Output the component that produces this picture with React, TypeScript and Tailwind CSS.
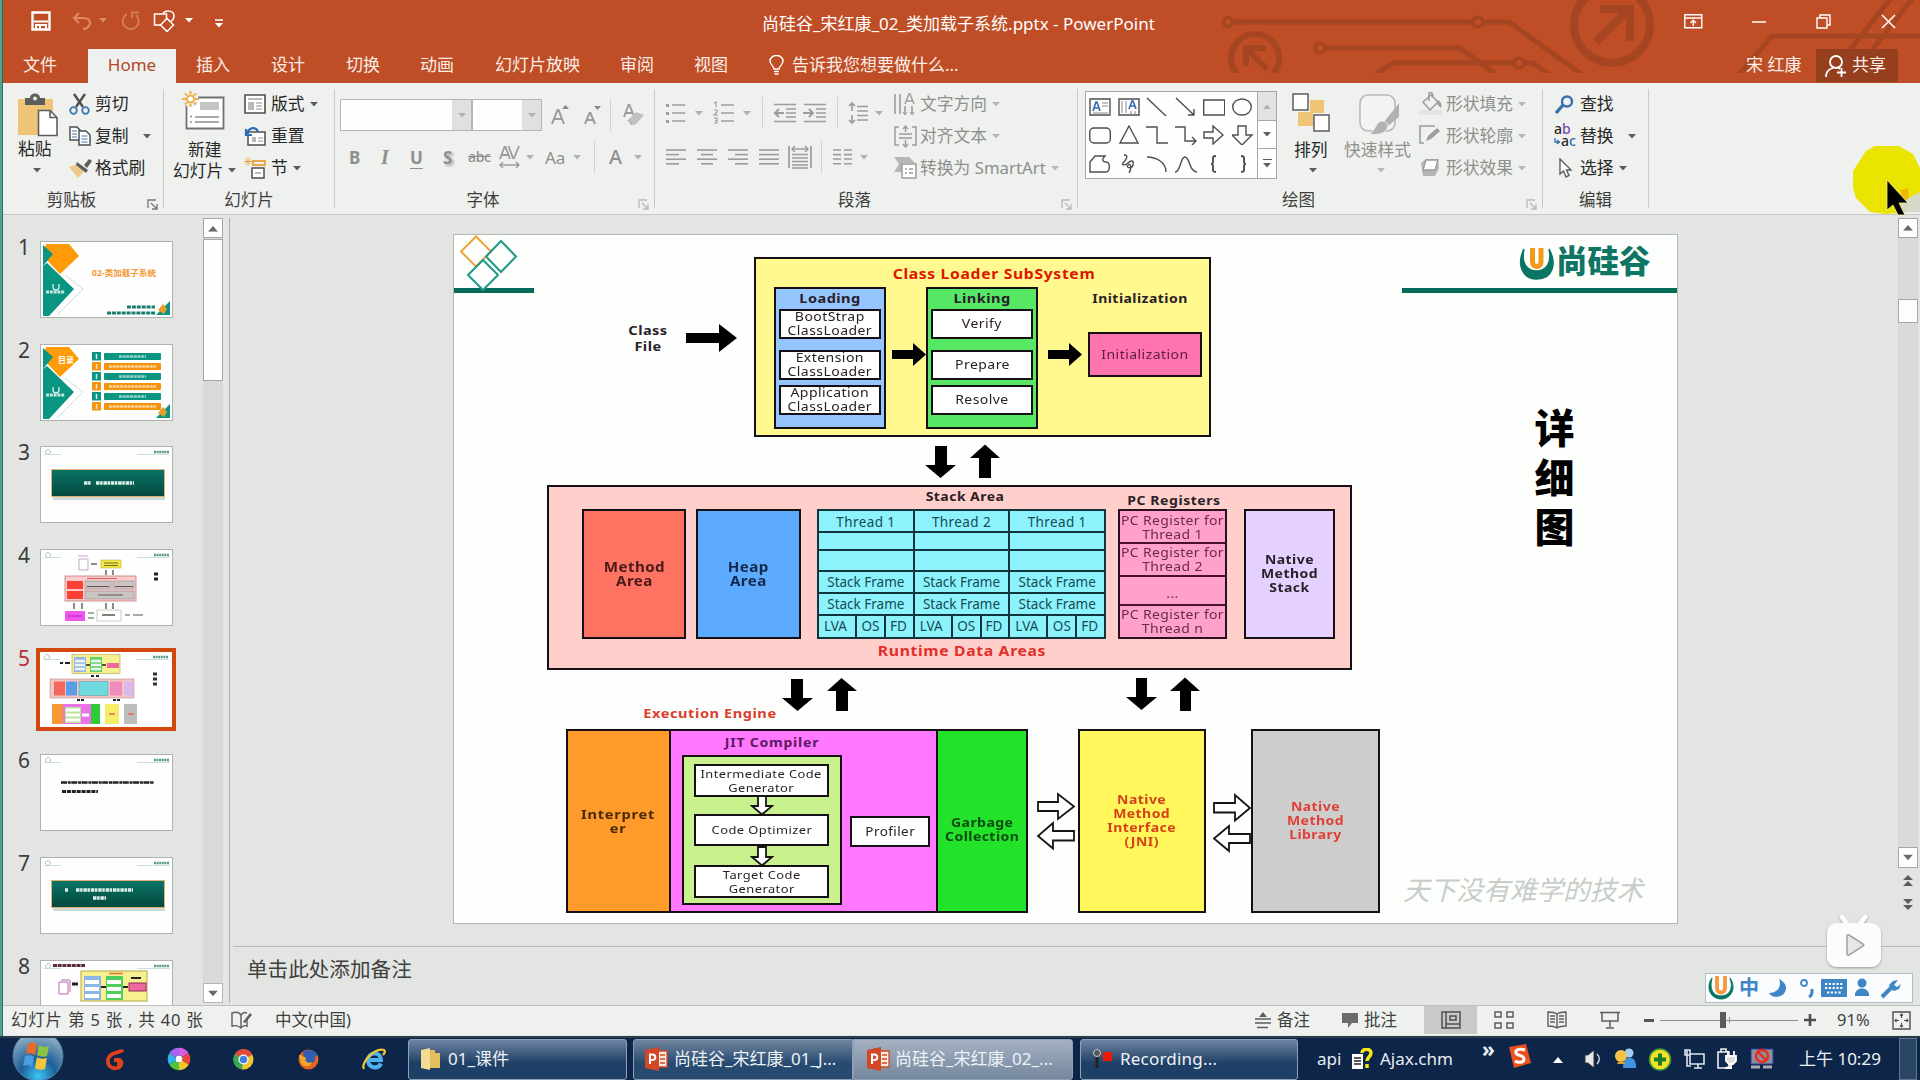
import React from "react";
import type { ReactNode } from "react";

const G = "#9b9d9b";
const D = "#4d4f4d";

function Svg({ w, h, className = "", children }: { w: number; h: number; className?: string; children: ReactNode }) {
  return (
    <svg width={w} height={h} viewBox={`0 0 ${w} ${h}`} className={`shrink-0 ${className}`} fill="none">
      {children}
    </svg>
  );
}

function Chev({ c = "#5c5e5c", className = "" }: { c?: string; className?: string }) {
  return (
    <Svg w={8} h={5} className={className}>
      <path d="M0 0h8L4 4.6z" fill={c} />
    </Svg>
  );
}

function Sep({ className = "" }: { className?: string }) {
  return <div className={`h-8 w-px shrink-0 bg-[#cfd1cf] ${className}`} />;
}

function Launcher({ c = "#777977", className = "" }: { c?: string; className?: string }) {
  return (
    <Svg w={11} h={11} className={className}>
      <path d="M1 9V1h8M4 4l5.5 5.5M10 5v5H5" stroke={c} strokeWidth="1.3" />
    </Svg>
  );
}

/* ------------------------------------------------------------------ title */

function Circuit() {
  return (
    <Svg w={700} h={73}>
      <g stroke="#a54521" strokeWidth="5">
        <circle cx="8" cy="22" r="4.5" strokeWidth="3.5" />
        <path d="M13 22H253M263 22h26l75 54" />
        <circle cx="258" cy="22" r="5" strokeWidth="3.5" />
        <circle cx="35" cy="58" r="24" strokeWidth="6" />
        <path d="M47 69L29 51M26 66V48h20" strokeWidth="6" />
        <circle cx="100" cy="48" r="5" strokeWidth="3.5" />
        <path d="M106 48H240l38 28M153 76l20-13h120M305 63h8l18 13" />
        <circle cx="299" cy="63" r="5" strokeWidth="3.5" />
        <circle cx="392" cy="25" r="38" strokeWidth="8" />
        <path d="M376 42l31-31M380 9h30v32" strokeWidth="8" />
        <path d="M518 76l34-40h148M630 50l41-52M652 50l41-52" />
      </g>
    </Svg>
  );
}

function TitleBar() {
  return (
    <div className="flex h-[49px] items-start text-white">
      <Svg w={20} h={20} className="mt-[11px] ml-[28px]">
        <path d="M1.5 1.5h17v17h-17z" stroke="#fff" strokeWidth="2.4" />
        <path d="M3 10.500h14M5 19v-5h10v5M9 14.500v4" stroke="#fff" strokeWidth="2" />
      </Svg>
      <Svg w={20} h={18} className="mt-[12px] ml-[21px]">
        <path d="M7 1L2 6l5 5M2 6h9c5 0 7 2 7 5s-3 6-7 6" stroke="#dd8869" strokeWidth="2.2" />
      </Svg>
      <Chev c="#dd8869" className="mt-[18px] ml-[7px]" />
      <Svg w={20} h={20} className="mt-[10px] ml-[14px]">
        <path d="M6 4A8 8 0 1 0 15 5M11 2v6M10.500 2.500H18" stroke="#d27a59" strokeWidth="2" />
      </Svg>
      <Svg w={26} h={22} className="mt-[10px] ml-[12px]">
        <path d="M1.500 4h12v11h-12zM10 3c3-3 11-3 11 3 0 2-1 4-3 5" stroke="#fff" strokeWidth="1.500" />
        <path d="M14 8.500l6.500 6.500-6.500 6.500L7.500 15z" stroke="#fff" fill="#bf4e26" strokeWidth="1.500" />
      </Svg>
      <Chev c="#fff" className="mt-[18px] ml-[6px]" />
      <Svg w={8} h={9} className="mt-[19px] ml-[22px]">
        <path d="M0 1h8" stroke="#fff" strokeWidth="1.500" />
        <path d="M0 4h8L4 8.500z" fill="#fff" />
      </Svg>
      <div className="mt-[12px] ml-[539px] w-[400px] text-[17px] leading-6 whitespace-nowrap">
        尚硅谷_宋红康_02_类加载子系统.pptx - PowerPoint
      </div>
      <Svg w={19} h={15} className="mt-[14px] ml-[522px]">
        <path d="M.8.800h17v13h-17zM1 4h17M9.300 12V6.500M6.500 9l2.800-2.800L12 9" stroke="#fff" strokeWidth="1.400" />
      </Svg>
      <Svg w={14} h={3} className="mt-[21px] ml-[49px]">
        <path d="M0 1h14" stroke="#fff" strokeWidth="1.500" />
      </Svg>
      <Svg w={15} h={15} className="mt-[14px] ml-[50px]">
        <path d="M1 4h10v10H1zM4 4V1h10v10h-3" stroke="#fff" strokeWidth="1.400" />
      </Svg>
      <Svg w={15} h={15} className="mt-[14px] ml-[50px]">
        <path d="M1 1l13 13M14 1L1 14" stroke="#fff" strokeWidth="1.500" />
      </Svg>
    </div>
  );
}

function Tab({ children, className = "" }: { children: ReactNode; className?: string }) {
  return <div className={`shrink-0 text-[17px] leading-[31px] whitespace-nowrap text-[#fbeee8] ${className}`}>{children}</div>;
}

function TabRow() {
  return (
    <div className="flex h-[34px]">
      <Tab className="ml-[20px] w-[65px]">文件</Tab>
      <div className="h-[34px] w-[88px] bg-[#eff1ee] text-center text-[17px] leading-[31px] text-[#b5472a]">Home</div>
      <Tab className="ml-[20px] w-[75px]">插入</Tab>
      <Tab className="w-[75px]">设计</Tab>
      <Tab className="w-[74px]">切换</Tab>
      <Tab className="w-[75px]">动画</Tab>
      <Tab className="w-[125px]">幻灯片放映</Tab>
      <Tab className="w-[74px]">审阅</Tab>
      <Tab className="w-[75px]">视图</Tab>
      <Svg w={15} h={20} className="mt-[6px]">
        <path d="M5 14c0-3-4-4-4-8a6.500 5.500 0 0 1 13 0c0 4-4 5-4 8zM5 16.500h5M5.500 19h4" stroke="#fff" strokeWidth="1.400" />
      </Svg>
      <Tab className="ml-[8px] w-[954px]">告诉我您想要做什么...</Tab>
      <Tab className="w-[70px]">宋 红康</Tab>
      <div className="flex h-[33px] w-[82px] bg-[#963f1e]">
        <Svg w={22} h={23} className="mt-[6px] ml-[9px]">
          <circle cx="11" cy="7" r="6" stroke="#fff" strokeWidth="1.800" />
          <path d="M1 22c0-6 3-8 7-9M13 12l2 2M12 17.500h9M16.500 13v9" stroke="#fff" strokeWidth="1.800" />
        </Svg>
        <Tab className="ml-[5px]">共享</Tab>
      </div>
    </div>
  );
}

/* ----------------------------------------------------------------- ribbon */

function Group({ w, label, launcher, children }: { w: string; label: string; launcher?: string; children: ReactNode }) {
  return (
    <div className={`flex h-[131px] shrink-0 ${w}`}>
      <div className="flex min-w-0 flex-1 flex-col">
        <div className="flex h-[103px] pt-[5px]">{children}</div>
        <div className="flex h-[28px] items-center">
          <div className="flex-1 text-center text-[16.500px] leading-7 text-[#3c3e3c]">{label}</div>
          {launcher && (
            <div className="mr-[5px] ml-[7px] w-[11px] shrink-0 pt-2">
              <Launcher c={launcher} />
            </div>
          )}
        </div>
      </div>
      <div className="mt-[6px] h-[119px] w-px bg-[#c9cbc9]" />
    </div>
  );
}

function Item({ icon, text, muted, chev, chevGap = "ml-[5px]" }: { icon: ReactNode; text: string; muted?: boolean; chev?: boolean; chevGap?: string }) {
  return (
    <div className={`flex h-8 items-center text-[16.800px] whitespace-nowrap ${muted ? "text-[#8d8f8d]" : "text-[#262826]"}`}>
      <div className="flex w-[26px] shrink-0 items-center justify-start">{icon}</div>
      <span>{text}</span>
      {chev && <Chev c={muted ? "#b5b7b5" : "#5c5e5c"} className={chevGap} />}
    </div>
  );
}

function Clipboard() {
  return (
    <Group w="w-[161px]" label="剪贴板" launcher="#777977">
      <div className="ml-[12px] flex w-[54px] flex-col items-start">
        <Svg w={44} h={44} className="mt-[5px] ml-[2px]">
          <path d="M1 6h35v36H1z" fill="#f0c477" />
          <path d="M8 5h5c0-6 10-6 10 0h5v7H8z" fill="#5c5e5c" />
          <circle cx="18" cy="5.500" r="2" fill="#eff1ee" />
          <path d="M21.500 17.500H33l7 7V42.500H21.500z" fill="#fff" stroke="#5c5e5c" strokeWidth="1.600" />
          <path d="M33 17.500v7h7" stroke="#5c5e5c" strokeWidth="1.600" />
        </Svg>
        <div className="mt-[0px] ml-[3px] text-[16.800px] leading-6 text-[#262826]">粘贴</div>
        <Chev className="mt-[7px] ml-[18px]" />
      </div>
      <div>
        <Item
          text="剪切"
          icon={
            <Svg w={21} h={22}>
              <path d="M5 1l9 13M16 1L7 14" stroke={D} strokeWidth="2.400" />
              <circle cx="4.500" cy="17.500" r="3.300" stroke="#3f76b5" strokeWidth="1.800" />
              <circle cx="16.500" cy="17.500" r="3.300" stroke="#3f76b5" strokeWidth="1.800" />
            </Svg>
          }
        />
        <Item
          text="复制"
          chev
          chevGap="ml-[14px]"
          icon={
            <Svg w={22} h={20}>
              <path d="M1 1h7l3 3v10H1z" stroke={D} strokeWidth="1.500" fill="#fff" />
              <path d="M3 5h5M3 8h5M3 11h5" stroke="#3f76b5" />
              <path d="M10 5h7l4 4v10H10z" stroke={D} strokeWidth="1.500" fill="#fff" />
              <path d="M12.500 10h6M12.500 13h6M12.500 16h6" stroke="#3f76b5" />
            </Svg>
          }
        />
        <Item
          text="格式刷"
          icon={
            <Svg w={23} h={20}>
              <path d="M0 9l8-3 8 6-7 8z" fill="#f0c98a" />
              <path d="M8 4l11 8-2 3L7 7zM15 7l5-6 3 2-5 7z" fill="#5c5e5c" />
            </Svg>
          }
        />
      </div>
    </Group>
  );
}

function Slides() {
  return (
    <Group w="w-[171px]" label="幻灯片">
      <div className="ml-[9px] flex w-[71px] flex-col">
        <Svg w={44} h={40} className="mt-[3px] ml-[9px]">
          <path d="M4.500 6.500h37v31h-37z" fill="#fff" stroke="#707270" strokeWidth="1.800" />
          <path d="M18 11h19v8H18z" fill="#c4c6c4" />
          <path d="M13 26h24M13 31h24" stroke="#8a8c8a" strokeWidth="1.500" />
          <path d="M8 25.500h2M8 31h2" stroke="#8a8c8a" strokeWidth="1.500" />
          <circle cx="8.500" cy="8" r="8" fill="#eff1ee" />
          <g stroke="#eeb04e" strokeWidth="2">
            <circle cx="8.500" cy="8" r="3.500" fill="#fff" />
            <path d="M8.500 0v3M8.500 13v3M0 8h4M13 8h4M3 2.500l2 2M12 11.500l2 2M14 2.500l-2 2M5 11.500l-2 2" />
          </g>
        </Svg>
        <div className="mt-[8px] ml-[15px] text-[16.800px] leading-[21px] text-[#262826]">新建</div>
        <div className="flex items-center text-[16.800px] leading-[21px] whitespace-nowrap text-[#262826]">
          幻灯片
          <Chev className="ml-[5px]" />
        </div>
      </div>
      <div className="[&>div>div]:w-[27px]">
        <Item
          text="版式"
          chev
          icon={
            <Svg w={22} h={20}>
              <path d="M1 1h20v18H1z" stroke={D} strokeWidth="1.600" fill="#fff" />
              <path d="M4 4h14v2H4zM4 8h6v8H4z" fill="#b8bab8" />
              <path d="M12 9h6M12 12h6M12 15h6" stroke="#8a8c8a" />
            </Svg>
          }
        />
        <Item
          text="重置"
          icon={
            <Svg w={22} h={21}>
              <path d="M4 6h17v13H4z" stroke={D} strokeWidth="1.500" fill="#fff" />
              <path d="M8 11h4v5H8z" fill="#b8bab8" />
              <path d="M14 12h5M14 15h5" stroke="#8a8c8a" />
              <path d="M2 3v6h6M3 8c2-7 9-8 11-2" stroke="#2f6db3" strokeWidth="2.200" />
            </Svg>
          }
        />
        <Item
          text="节"
          chev
          icon={
            <Svg w={22} h={22}>
              <path d="M9 4h12v4H9z" stroke="#eba84a" strokeWidth="2" />
              <path d="M8 11h12v10H8z" stroke={D} strokeWidth="1.500" fill="#fff" />
              <path d="M11 16h6" stroke="#b8bab8" strokeWidth="2" />
              <path d="M4 0v9M0 4.500h8M1 1.500l6 6M7 1.500l-6 6" stroke="#eba84a" />
            </Svg>
          }
        />
      </div>
    </Group>
  );
}

function FontGroup() {
  return (
    <Group w="w-[320px]" label="字体" launcher="#b9bbb9">
      <div className="flex flex-col pt-[11px]">
        <div className="flex h-8 items-center">
          <div className="ml-[5px] flex h-8 w-[132px] justify-end border border-[#b4b6b4] bg-[#fdfefd]">
            <div className="flex w-[19px] items-center justify-center bg-[#dfe1df]">
              <Chev c="#b0b2b0" />
            </div>
          </div>
          <div className="flex h-8 w-[70px] justify-end border border-[#b4b6b4] bg-[#fdfefd]">
            <div className="flex w-[19px] items-center justify-center bg-[#dfe1df]">
              <Chev c="#b0b2b0" />
            </div>
          </div>
          <Svg w={19} h={20} className="ml-[9px]">
            <path d="M1 19L6.500 5h1L13 19M3 14h8" stroke={G} strokeWidth="2" />
            <path d="M11 4l3.500-4L18 4z" fill="#868886" />
          </Svg>
          <Svg w={18} h={20} className="ml-[14px]">
            <path d="M1 19L5.500 8h1L11 19M3 15h6" stroke={G} strokeWidth="2" />
            <path d="M10 1h7l-3.500 4z" fill="#868886" />
          </Svg>
          <Sep className="ml-[8px]" />
          <Svg w={24} h={22} className="ml-[11px]">
            <path d="M2 13L6.500 1h1l4 10M4 9h6" stroke={G} strokeWidth="1.900" />
            <path d="M6 16l8-8 8 3-8 9-4 1z" fill="#bfc1bf" />
            <path d="M6 16l4 5" stroke={G} />
          </Svg>
        </div>
        <div className="mt-[10px] flex h-8 items-center text-[17px] leading-none text-[#8e908e]">
          <b className="ml-[14px] w-[12px]">B</b>
          <i className="ml-[20px] w-[10px] font-['Liberation_Serif',serif] text-[20px] font-bold">I</i>
          <b className="ml-[19px] w-[13px] underline underline-offset-4">U</b>
          <b className="ml-[20px] w-[12px] drop-shadow-[2px_2px_1px_#aaa]">S</b>
          <span className="ml-[13px] w-[24px] text-[14px] font-medium tracking-[-0.300px] line-through">abc</span>
          <Svg w={21} h={24} className="ml-[7px]">
            <path d="M1 14L5.500 2h1L11 14M3 10h6M9.500 1L14 13h1l5-12" stroke={G} strokeWidth="1.800" />
            <path d="M1 20h19M4 17l-3 3 3 3M17 17l3 3-3 3" stroke={G} strokeWidth="1.500" />
          </Svg>
          <Chev c="#b0b2b0" className="ml-[6px]" />
          <span className="ml-[11px] w-[23px] text-[17px]">Aa</span>
          <Chev c="#b0b2b0" className="ml-[5px]" />
          <Sep className="ml-[13px]" />
          <span className="ml-[14px] w-[14px] text-[20px] font-medium">A</span>
          <Chev c="#b0b2b0" className="ml-[11px]" />
        </div>
      </div>
    </Group>
  );
}

function Lines({ rows, className }: { rows: [number, number][]; className: string }) {
  return (
    <Svg w={20} h={18} className={className}>
      {rows.map(([a, b], i) => (
        <path key={i} d={`M${a} ${2 + i * 4.600}H${b}`} stroke={G} strokeWidth="1.600" />
      ))}
    </Svg>
  );
}

function Paragraph() {
  return (
    <Group w="w-[423px]" label="段落" launcher="#b9bbb9">
      <div className="flex w-[239px] flex-col pt-[9px]">
        <div className="flex h-8 items-center">
          <Svg w={21} h={22} className="ml-[10px]">
            <path d="M7 3h13M7 11h13M7 19h13" stroke={G} strokeWidth="1.600" />
            <path d="M1 2h3v3H1zM1 10h3v3H1zM1 18h3v3H1z" fill={G} />
          </Svg>
          <Chev c="#b0b2b0" className="ml-[9px]" />
          <Svg w={22} h={24} className="ml-[10px]">
            <path d="M8 4h13M8 12h13M8 20h13" stroke={G} strokeWidth="1.600" />
            <path d="M1 2l2-1v5M1 9h3v2l-3 3h4M1 17h3v5H1M2 19.500h2" stroke={G} strokeWidth="1.200" />
          </Svg>
          <Chev c="#b0b2b0" className="ml-[8px]" />
          <Sep className="ml-[11px]" />
          <Svg w={24} h={20} className="ml-[10px]">
            <path d="M1 1.500h22M13 6h10M13 10h10M13 14h10M1 18.500h22" stroke={G} strokeWidth="1.500" />
            <path d="M11 10H3M6 6l-4 4 4 4" stroke={G} strokeWidth="2" />
          </Svg>
          <Svg w={24} h={20} className="ml-[6px]">
            <path d="M1 1.500h22M13 6h10M13 10h10M13 14h10M1 18.500h22" stroke={G} strokeWidth="1.500" />
            <path d="M0 10h9M6 6l4 4-4 4" stroke={G} strokeWidth="2" />
          </Svg>
          <Sep className="ml-[10px]" />
          <Svg w={21} h={22} className="ml-[10px]">
            <path d="M4 1v8M4 13v8M1 4l3-3 3 3M1 18l3 3 3-3" stroke={G} strokeWidth="1.700" />
            <path d="M9 4.500h11M9 9h11M9 13.500h11M9 18h11" stroke={G} strokeWidth="1.600" />
          </Svg>
          <Chev c="#b0b2b0" className="ml-[6px]" />
        </div>
        <div className="mt-[12px] flex h-8 items-center">
          <Lines className="ml-[11px]" rows={[[0, 20], [0, 13], [0, 20], [0, 13]]} />
          <Lines className="ml-[11px]" rows={[[0, 20], [4, 16], [0, 20], [4, 16]]} />
          <Lines className="ml-[11px]" rows={[[0, 20], [7, 20], [0, 20], [7, 20]]} />
          <Lines className="ml-[11px]" rows={[[0, 20], [0, 20], [0, 20], [0, 20]]} />
          <Svg w={24} h={24} className="ml-[9px]">
            <path d="M1 1v22M23 1v22M4 9.500h16M4 13h16M4 16.500h16M4 20h16M4 23h16" stroke={G} strokeWidth="1.700" />
            <path d="M4 4h16M7 1L4 4l3 3M17 1l3 3-3 3" stroke={G} strokeWidth="1.500" />
          </Svg>
          <Sep className="ml-[9px]" />
          <Svg w={20} h={18} className="ml-[11px]">
            <path d="M0 2h8M0 6.600h8M0 11h8M0 15.800h8M11 2h8M11 6.600h8M11 11h8M11 15.800h8" stroke={G} strokeWidth="1.600" />
          </Svg>
          <Chev c="#b0b2b0" className="ml-[7px]" />
        </div>
      </div>
      <div>
        <Item
          muted
          chev
          text="文字方向"
          icon={
            <Svg w={22} h={23}>
              <path d="M1 1v20M6 1v20M11 13v8M18 13v8" stroke={G} strokeWidth="1.600" />
              <path d="M11 11l4-10h1l4 10M12 8h7" stroke={G} strokeWidth="1.400" />
              <path d="M9 19l2 3 2-3M16 19l2 3 2-3" stroke={G} />
            </Svg>
          }
        />
        <Item
          muted
          chev
          text="对齐文本"
          icon={
            <Svg w={23} h={23}>
              <path d="M5 2H1v18h4M18 2h4v18h-4" stroke={G} strokeWidth="1.500" />
              <path d="M5 9h13M5 13h13M11.500 7V1M9 4l2.500-3L14 4M11.500 15v7M9 19l2.500 3 2.500-3" stroke={G} strokeWidth="1.400" />
            </Svg>
          }
        />
        <Item
          muted
          chev
          text="转换为 SmartArt"
          icon={
            <Svg w={24} h={24}>
              <path d="M0 1h15l6 6H9v9H0l5-8z" fill="#b5b7b5" />
              <path d="M8 8h14v14H8z" fill="#fff" stroke={G} strokeWidth="1.500" />
              <path d="M11 13h2M15 13h4M11 17h2M15 17h4" stroke={G} strokeWidth="1.400" />
            </Svg>
          }
        />
      </div>
    </Group>
  );
}

function ShapeGallery() {
  const s = { stroke: "#4d4f4d", strokeWidth: 1.400 };
  const cells: ReactNode[] = [
    <g key="a"><path d="M1 2h20v16H1z" {...s} /><path d="M4 14L7 5h1l3 9M5 11h5" stroke="#2e6ab0" strokeWidth="1.600" /><path d="M13 6h6M13 9h6M4 16h15" stroke="#888" /></g>,
    <g key="b"><path d="M1 2h20v16H1z" {...s} /><path d="M11 12l3-8h1l3 8M12 9h5" stroke="#2e6ab0" strokeWidth="1.600" /><path d="M4 4v12M8 4v12M13 14v3M17 14v3" stroke="#888" /></g>,
    <path key="c" d="M1 1l19 18" {...s} />,
    <path key="d" d="M1 1l18 17M19 12v6h-6" {...s} />,
    <path key="e" d="M0.700 3h21v15h-21z" {...s} />,
    <ellipse key="f" cx="10" cy="10" rx="9.300" ry="8" {...s} />,
    <rect key="g" x="0.800" y="3" width="20.500" height="15" rx="4" {...s} />,
    <path key="h" d="M11 1l9 17H2z" {...s} />,
    <path key="i" d="M0 2h11v16h11" {...s} />,
    <path key="j" d="M0 2h10v14h11M17 12l4 4-4 4" {...s} />,
    <path key="k" d="M1 7h9V1l10 9-10 9v-6H1z" {...s} />,
    <path key="l" d="M6 1h8v9h6L10 20 0 10h6z" {...s} />,
    <path key="m" d="M1 8l5-6h10c-4 4-2 6 1 6 5 0 4 10 0 10H1z" {...s} />,
    <path key="n" d="M6 1c6 0 1 6-1 8s2 3 5 0 6-3 5 2-8 2-5 0 4 3 1 8" {...s} />,
    <path key="o" d="M1 3c9 0 19 5 19 15" {...s} />,
    <path key="p" d="M0 18c6 0 5-15 10-15s4 15 12 15" {...s} />,
    <path key="q" d="M13 2c-4 0-3 2-3 5s-1 3-2 3c1 0 2 0 2 3s-1 5 3 5" {...s} strokeWidth={1.900} />,
    <path key="r" d="M9 2c4 0 3 2 3 5s1 3 2 3c-1 0-2 0-2 3s1 5-3 5" {...s} strokeWidth={1.900} />,
  ];
  return (
    <div className="mt-[3px] ml-[7px] flex h-[88px] w-[192px] border border-[#a5a7a5] bg-[#fdfefd]">
      <div className="grid w-[171px] grid-cols-6 grid-rows-3 place-items-center pt-[1px]">
        {cells.map((c, i) => (
          <Svg key={i} w={22} h={20}>{c}</Svg>
        ))}
      </div>
      <div className="flex w-[19px] flex-col border-l border-[#a5a7a5]">
        <div className="flex h-[29px] items-center justify-center border-b border-[#a5a7a5] bg-[#e1e3e1]">
          <Chev c="#b0b2b0" className="rotate-180" />
        </div>
        <div className="flex h-[28px] items-center justify-center border-b border-[#a5a7a5]">
          <Chev />
        </div>
        <div className="flex flex-1 flex-col items-center justify-center gap-[3px]">
          <div className="h-px w-[9px] bg-[#5c5e5c]" />
          <Chev />
        </div>
      </div>
    </div>
  );
}

function Drawing() {
  return (
    <Group w="w-[465px]" label="绘图" launcher="#b9bbb9">
      <ShapeGallery />
      <div className="ml-[15px] flex w-[42px] flex-col items-start">
        <Svg w={39} h={40} className="mt-[5px]">
          <path d="M18 7h14v13H18zM6 19h15v14H6z" fill="#f0c477" />
          <path d="M1 1h15v16H1zM22 22h15v16H22z" fill="#fff" stroke="#5c5e5c" strokeWidth="1.500" />
        </Svg>
        <div className="mt-[5px] ml-[2px] text-[16.800px] leading-6 text-[#262826]">排列</div>
        <Chev className="mt-[6px] ml-[17px]" />
      </div>
      <div className="ml-[10px] flex w-[75px] flex-col items-start">
        <Svg w={44} h={42} className="mt-[6px] ml-[15px]">
          <rect x="1" y="1" width="35" height="36" rx="8" fill="#f4f2f5" stroke="#b9bbb9" strokeWidth="1.600" />
          <path d="M40 9v14l-11 9-4-4z" fill="#b0b2b0" />
          <path d="M24 27c4 1 6 4 4 8-3 6-13 6-18 5 5-2 5-5 7-8 2-4 5-5 7-5z" fill="#b0b2b0" stroke="#eff1ee" />
        </Svg>
        <div className="mt-[2px] text-[16.800px] leading-6 text-[#8d8f8d]">快速样式</div>
        <Chev c="#b5b7b5" className="mt-[6px] ml-[33px]" />
      </div>
      <div className="[&>div>div]:w-[27px]">
        <Item
          muted
          chev
          text="形状填充"
          icon={
            <Svg w={23} h={24}>
              <path d="M0 18h23v5H0z" fill="#e3e5e3" />
              <path d="M4 10l8-7 7 7-8 8zM10 9V1c3-2 4 2 4 4" stroke={G} strokeWidth="1.500" />
              <path d="M18 8c4 1 5 4 4 8l-4-4z" fill={G} />
            </Svg>
          }
        />
        <Item
          muted
          chev
          text="形状轮廓"
          icon={
            <Svg w={22} h={22}>
              <path d="M16 1H1v17h4" stroke={G} strokeWidth="1.600" />
              <path d="M7 16l2-5 9-8 3 3-9 8z" fill={G} />
            </Svg>
          }
        />
        <Item
          muted
          chev
          text="形状效果"
          icon={
            <Svg w={22} h={20}>
              <path d="M2 5l5-4h12l1 9-4 8H4z" fill="#b4b6b4" />
              <path d="M7 2h12l-3 10H4z" fill="#fdfdfd" stroke={G} strokeWidth="1.400" />
            </Svg>
          }
        />
      </div>
    </Group>
  );
}

function Editing() {
  return (
    <Group w="w-[106px]" label="编辑">
      <div className="ml-[11px]">
        <Item
          text="查找"
          icon={
            <Svg w={20} h={19}>
              <circle cx="13" cy="6.500" r="5" stroke="#3a70ad" strokeWidth="2.400" />
              <path d="M9 10l-7 8" stroke="#3a70ad" strokeWidth="3.400" />
            </Svg>
          }
        />
        <Item
          text="替换"
          chev
          chevGap="ml-[14px]"
          icon={
            <Svg w={24} h={25} className="overflow-visible">
              <text x="0" y="10" fontSize="14" fontWeight="500" fill="#262826">a<tspan fill="#7d4fa8">b</tspan></text>
              <text x="7" y="22" fontSize="14" fontWeight="500" fill="#262826">a<tspan fill="#2f6db3">c</tspan></text>
              <path d="M1 14v4h4M3 16l2.500 2L3 20" stroke="#2f6db3" strokeWidth="1.300" />
            </Svg>
          }
        />
        <Item
          text="选择"
          chev
          icon={
            <Svg w={20} h={21}>
              <path d="M6 1v15l3.500-3 2.500 6 3-1.500-2.500-5.500H17z" fill="#fff" stroke="#5c5e5c" strokeWidth="1.400" />
            </Svg>
          }
        />
      </div>
    </Group>
  );
}

/* ------------------------------------------------------------- thumbnails */

function MiniHeader() {
  return (
    <g>
      <path d="M4 5l3-3 3 3-3 3z" fill="none" stroke="#8fb8ae" strokeWidth=".8" />
      <path d="M3 7.500h17M96 7.500h33" stroke="#b7d1ca" strokeWidth=".7" />
      <path d="M113 5h15" stroke="#5a9a8c" strokeWidth="2.500" strokeDasharray="2 .6" />
    </g>
  );
}

function CoverShapes() {
  return (
    <g>
      <path d="M5 2h23l10 12-19 18L2 14z" fill="#ff9a08" />
      <path d="M2 3l10 9L2 24z" fill="#0a9482" />
      <path d="M6 21l27 26L8 74H2V24z" fill="#0a9482" />
      <path d="M24 33l18 14-26 26" fill="none" stroke="#bfd2da" strokeWidth=".8" />
      <path d="M115 73l14-14v14z" fill="#0a9482" />
      <path d="M117 68l5-6 4 5-3 5z" fill="#e99b2b" />
      <path d="M12 42v3a3 3 0 0 0 6 0v-3" stroke="#d8f0ea" fill="none" strokeWidth="1.300" />
      <path d="M5 50h19" stroke="#c4e6de" strokeWidth="3" strokeDasharray="3 .8" />
    </g>
  );
}

function Banner({ two }: { two?: boolean }) {
  return (
    <g>
      <defs>
        <linearGradient id="banner" x1="0" x2="0" y1="0" y2="1">
          <stop offset="0" stopColor="#0a7566" />
          <stop offset="1" stopColor="#04473d" />
        </linearGradient>
      </defs>
      <path d="M12 51.500h112" stroke="#cfdad7" strokeWidth="3" />
      <rect x="10.500" y="22.500" width="113" height="27" fill="url(#banner)" stroke="#e0b070" />
      {two ? (
        <path d="M24 32h3M35 32h57M52 40h13" stroke="#d9efe9" strokeWidth="3.500" strokeDasharray="3.500 .6 2.500 .8" />
      ) : (
        <path d="M43 36h7M55 36h38" stroke="#d9efe9" strokeWidth="3.500" strokeDasharray="3.500 .6 2.500 .8" />
      )}
    </g>
  );
}

const AGENDA = ["#0a9482", "#f5930c", "#0a9482", "#f5930c", "#0a9482", "#f5930c"];

const THUMBS: ReactNode[] = [
  <g key="1">
    <CoverShapes />
    <text x="51" y="34" fontSize="8.500" fontWeight="700" fill="#f29a3a" textLength="64">02-类加载子系统</text>
    <path d="M86 65h28M66 71h49" stroke="#1a7d70" strokeWidth="3" strokeDasharray="4 .9" />
  </g>,
  <g key="2">
    <CoverShapes />
    <text x="17" y="18" fontSize="8" fontWeight="700" fill="#fff">目录</text>
    {AGENDA.map((c, i) => (
      <g key={i}>
        <rect x="51" y={7 + i * 10} width="9" height="8.500" fill={c} />
        <rect x="63" y={8 + i * 10} width="57" height="7" rx="1" fill={c} />
        <path d={i % 2 ? `M68 ${11.500 + i * 10}h47` : `M78 ${11.500 + i * 10}h27`} stroke="#fff" strokeOpacity=".6" strokeWidth="2.500" strokeDasharray="3 .7" />
        <path d={`M55.500 ${9 + i * 10}v5`} stroke="#fff" strokeOpacity=".8" strokeWidth="1.500" />
      </g>
    ))}
  </g>,
  <g key="3"><MiniHeader /><Banner /></g>,
  <g key="4">
    <MiniHeader />
    <path d="M38 9h9v11h-9zM37 6h10" stroke="#c4a4cc" fill="none" />
    <path d="M50 14h6M65 20v5M72 20v5M33 53v6M41 53v6M65 53v6M72 53v6" stroke="#666" strokeWidth="1.500" />
    <rect x="60" y="10" width="20" height="8" fill="#f2ea3c" stroke="#a8a24a" strokeWidth=".5" />
    <path d="M63 13h14M63 15.500h14" stroke="#6d6a20" />
    <rect x="24" y="26" width="71" height="25" fill="#ffcaca" stroke="#b98080" strokeWidth=".8" />
    <path d="M46 28.500h30" stroke="#e06060" />
    <path d="M26 31h16v8H26zM26 41h16v8H26z" fill="#fa4034" />
    <path d="M44 31h26v8H44zM72 31h21v8H72zM44 41h49v8H44z" fill="#c9c5c5" stroke="#8a8080" strokeWidth=".5" />
    <path d="M46 36.500h22M74 36.500h18M57 45h25" stroke="#6a5555" />
    <rect x="24" y="61" width="20" height="10" fill="#f255ec" />
    <path d="M27 66h14" stroke="#b02ab0" />
    <path d="M47 63h6M47 68h6M84 65h5M92 65h10" stroke="#555" />
    <rect x="56" y="60" width="24" height="11" fill="#fff" stroke="#c8d0c0" />
    <path d="M61 65h13" stroke="#555" strokeWidth="1.500" />
    <path d="M113 24h4M113 29h4" stroke="#222" strokeWidth="3" />
  </g>,
  <g key="5">
    <MiniHeader />
    <path d="M20 11h3M25 11h5M51 24h3M56 24h3M37 48h3M41 48h3M73 48h3M77 48h3" stroke="#222" strokeWidth="2" />
    <rect x="32" y="2.500" width="48" height="19" fill="#f7f08e" stroke="#a8a04c" strokeWidth=".6" />
    <rect x="34" y="5" width="12" height="15" fill="#93b9e0" />
    <rect x="50" y="5" width="12" height="15" fill="#5ed36a" />
    <path d="M35 9h10M35 13h10M35 17h10M51 9h10M51 13h10M51 17h10" stroke="#eef3f3" strokeWidth="2.500" />
    <rect x="67" y="11" width="12" height="5" fill="#ee6a9e" />
    <path d="M46 13h4M62 13h4" stroke="#222" strokeWidth="1.500" />
    <rect x="10" y="27" width="84" height="19" fill="#f7c4c4" stroke="#a08080" strokeWidth=".5" />
    <path d="M14 29.500h11v14H14z" fill="#f0695c" />
    <path d="M26 29.500h11v14H26z" fill="#5a9ee8" />
    <path d="M39 29.500h29v14H39z" fill="#6fdbe0" stroke="#4a9aa0" strokeWidth=".5" />
    <path d="M70 29.500h12v14H70z" fill="#ee8dbb" />
    <path d="M84 29.500h9v14h-9z" fill="#d8b9ee" />
    <path d="M12 52h11v20H12z" fill="#f79a36" />
    <path d="M23 52h28v20H23z" fill="#ea72ea" />
    <path d="M51 52h9v20h-9z" fill="#2ecb38" />
    <path d="M25 55h16v16H25z" fill="#bfe29a" />
    <path d="M26 58h14M26 63h14M26 68h14M42 63h7" stroke="#fff" strokeWidth="3" />
    <path d="M65 52h14v20H65z" fill="#f5ee66" />
    <path d="M84 52h13v20H84z" fill="#bcbebc" />
    <path d="M69 62h6M88 62h6" stroke="#e06a50" strokeWidth="1.500" />
    <path d="M113 22h4M113 27h4M113 32h4" stroke="#333" strokeWidth="3" />
  </g>,
  <g key="6">
    <MiniHeader />
    <path d="M20 27.500h93" stroke="#222" strokeWidth="2.500" strokeDasharray="6 .8 3 .5" />
    <path d="M21 36.500h36" stroke="#222" strokeWidth="3" strokeDasharray="4 .9" />
  </g>,
  <g key="7"><MiniHeader /><Banner two /></g>,
  <g key="8">
    <MiniHeader />
    <path d="M12 4.500h32" stroke="#5c2f38" strokeWidth="3" strokeDasharray="4 .7" />
    <path d="M18 21h9v12h-9zM20 19h9v12" stroke="#b46ab4" fill="none" />
    <path d="M31 23h6" stroke="#222" strokeWidth="3" />
    <rect x="40" y="10" width="66" height="30" fill="#f7f08e" stroke="#b0a84c" />
    <path d="M68 12.500h14" stroke="#e07030" strokeWidth="1.500" />
    <path d="M43 15h17v24H43z" fill="#8cb4e4" />
    <path d="M65 15h17v24H65z" fill="#4fce5c" />
    <path d="M44 21h14M44 28h14M44 35h14M66 21h14M66 28h14M66 35h14" stroke="#fff" strokeWidth="4" />
    <rect x="88" y="22" width="17" height="8" fill="#ee6a9e" stroke="#922a5c" />
    <path d="M60 26h5M82 26h5M90 17h10" stroke="#222" strokeWidth="2" />
    <path d="M10 45h114" stroke="#222" strokeWidth="2" strokeDasharray="6 1" />
  </g>,
];

function ThumbPane() {
  return (
    <div className="flex h-[790px] w-[227px] shrink-0">
      <div className="flex h-[790px] w-[200px] flex-col overflow-hidden pt-[17px]">
        {THUMBS.map((t, i) => (
          <div key={i} className="flex h-[102.700px] shrink-0">
            <div className={`mt-[1px] w-[36px] shrink-0 pl-[15px] text-[21px] leading-[28px] ${i === 4 ? "text-[#b5303a]" : "text-[#3a3c3a]"}`}>{i + 1}</div>
            {i === 4 ? (
              <div className="mt-[5px] -ml-[3px] h-[83px] w-[140px] border-4 border-[#d2480e] bg-white">
                <Svg w={132} h={75}>{t}</Svg>
              </div>
            ) : (
              <div className="mt-[9px] ml-[0.5px] h-[77px] w-[133px] border border-[#b0b2b0] bg-[#fdfefd]">
                <Svg w={131} h={75}>{t}</Svg>
              </div>
            )}
          </div>
        ))}
      </div>
      <div className="mt-[3px] flex h-[785px] w-[20px] flex-col bg-[#d9dad8]">
        <div className="flex h-[20px] items-center justify-center border border-[#a5a7a5] bg-[#fdfefd]">
          <Chev c="#666866" className="scale-125 rotate-180" />
        </div>
        <div className="mt-[1px] h-[142px] border border-[#a5a7a5] bg-[#fdfefd]" />
        <div className="mt-auto flex h-[20px] items-center justify-center border border-[#b5b7b5] bg-[#fdfefd]">
          <Chev c="#666866" className="scale-125" />
        </div>
      </div>
      <div className="mt-[3px] ml-[6px] h-[785px] w-px bg-[#adafad]" />
    </div>
  );
}

/* ------------------------------------------------------------------ slide */

function Box({ className, children }: { className: string; children?: ReactNode }) {
  return (
    <div className={`absolute flex items-center justify-center border-2 border-[#151015] text-center leading-[14px] whitespace-nowrap ${className}`}>
      {children && <div className="scale-x-[1.12]">{children}</div>}
    </div>
  );
}

function Caption({ className, children }: { className: string; children: ReactNode }) {
  return (
    <div className={`absolute -translate-x-1/2 -translate-y-1/2 scale-x-[1.12] text-center leading-4 font-bold whitespace-nowrap ${className}`}>{children}</div>
  );
}

function StackColumn({ name, last }: { name: string; last?: boolean }) {
  return (
    <div className={`flex flex-1 flex-col divide-y-2 divide-[#12343c] ${last ? "" : "border-r-2 border-[#12343c]"}`}>
      <div className="h-[22px] text-[13.500px] leading-[22px]">{name}</div>
      <div className="h-[18px]" />
      <div className="h-[21px]" />
      <div className="h-[22px] text-[13.500px] leading-[21px] tracking-normal">Stack Frame</div>
      <div className="h-[22px] text-[13.500px] leading-[21px] tracking-normal">Stack Frame</div>
      <div className="flex flex-1 divide-x-2 divide-[#12343c] text-[13.500px] leading-[21px] tracking-normal">
        <div className="w-[38px] pr-[3px]">LVA</div>
        <div className="w-[29px]">OS</div>
        <div className="flex-1 pr-[2px]">FD</div>
      </div>
    </div>
  );
}

function Register({ className, children }: { className: string; children: ReactNode }) {
  return (
    <div className={className}>
      <div className="scale-x-[1.12]">{children}</div>
    </div>
  );
}

function SlideDrawing() {
  return (
    <svg className="absolute top-0 left-0" width="1223" height="688" viewBox="454 235 1223 688" fill="none">
      <g strokeWidth="2">
        <path d="M476 236.500l15 15-15 15-15-15z" stroke="#eda33a" />
        <path d="M501 241l15 15.500-15 15.500-15-15.500z" stroke="#1f9a8a" />
        <path d="M483 260l15 15-15 15-15-15z" stroke="#1f9a8a" fill="#fff" />
      </g>
      <path d="M1524 249c-7 14-3 30 13 30s20-16 12-30c3 13-2 22-12.500 22S1521 262 1524 249z" fill="#0b7563" stroke="#0b7563" strokeWidth="1.500" />
      <path d="M1532.500 248v14c0 6 8.500 6 8.500 0v-14" stroke="#f39a1c" strokeWidth="5" />
      <g fill="#000">
        <path d="M686 333h33v-9l18 14-18 14v-9h-33z" />
        <path d="M892 350h21v-7l13 11.500-13 11.500v-7h-21z" />
        <path d="M1048 350h21v-7l13 11.500-13 11.500v-7h-21z" />
        <path d="M935 446h12v19h9l-15.500 13L925 465h10z" />
        <path d="M979 478h12v-20h9l-15-13.500L970 458h9z" />
        <path d="M791 679h12v19h10l-15.500 13L782 698h9z" />
        <path d="M836 711h12v-20h9l-15.500-13L827 691h9z" />
        <path d="M1136 678h11v19h10l-15.500 13L1126 697h10z" />
        <path d="M1180 711h11v-20h9l-15-13.500L1170 691h10z" />
      </g>
      <g fill="#fff" stroke="#151515" strokeWidth="1.800">
        <path d="M1038 802h20v-8l16 12.500-16 12.500v-8h-20z" />
        <path d="M1074 831h-21v-8l-15 13 15 12.500v-8h21z" />
        <path d="M1214 803h21v-8l15 13-15 12.500v-8h-21z" />
        <path d="M1250 834h-21v-8l-15 12.500 15 12.500v-8h21z" />
      </g>
    </svg>
  );
}

function DownHollow({ className }: { className: string }) {
  return (
    <svg className={`absolute ${className}`} width="24" height="21" viewBox="0 0 24 21">
      <path d="M8 1v10H2l10 8.500L22 11h-6V1z" fill="#fff" stroke="#151515" strokeWidth="1.800" />
    </svg>
  );
}

function Slide() {
  return (
    <div className="relative h-[690px] w-[1225px] border border-[#b4b8b5] bg-[#fdfffd] text-[12.500px] tracking-[0.400px] text-[#2a2028]">
      <div className="absolute top-[53px] left-0 h-[5px] w-[80px] bg-[#066b59]" />
      <div className="absolute top-[53px] right-0 h-[5px] w-[275px] bg-[#066b59]" />
      <div className="absolute top-[7px] left-[1102px] text-[31.500px] leading-[38px] font-black tracking-normal text-[#0f7564]">尚硅谷</div>

      <Box className="top-[22px] left-[300px] h-[180px] w-[457px] bg-[#fff98f]" />
      <Caption className="top-[39px] left-[540px] text-[14px] tracking-[0.600px] text-[#de1500]">Class Loader SubSystem</Caption>
      <Box className="top-[52px] left-[320px] h-[142px] w-[112px] bg-[#94c6fd]" />
      <Caption className="top-[63px] left-[376px] text-[13px]">Loading</Caption>
      <Box className="top-[74px] left-[325px] h-[30px] w-[102px] bg-white">BootStrap<br />ClassLoader</Box>
      <Box className="top-[115px] left-[325px] h-[30px] w-[102px] bg-white">Extension<br />ClassLoader</Box>
      <Box className="top-[150px] left-[325px] h-[30px] w-[102px] bg-white">Application<br />ClassLoader</Box>
      <Box className="top-[52px] left-[472px] h-[142px] w-[112px] bg-[#56e765]" />
      <Caption className="top-[63px] left-[528px] text-[13px]">Linking</Caption>
      <Box className="top-[74px] left-[477px] h-[30px] w-[102px] bg-white">Verify</Box>
      <Box className="top-[115px] left-[477px] h-[30px] w-[102px] bg-white">Prepare</Box>
      <Box className="top-[150px] left-[477px] h-[30px] w-[102px] bg-white">Resolve</Box>
      <Caption className="top-[64px] left-[686px] text-[12.500px]">Initialization</Caption>
      <Box className="top-[97px] left-[634px] h-[45px] w-[114px] bg-[#ff73af] text-[12.500px] text-[#5b1a45]">Initialization</Box>
      <Caption className="top-[103px] left-[194px] text-[13px]">Class<br />File</Caption>

      <Box className="top-[250px] left-[93px] h-[185px] w-[805px] bg-[#ffd0cb]" />
      <Caption className="top-[262px] left-[511px]">Stack Area</Caption>
      <Caption className="top-[266px] left-[720px] tracking-[0.500px]">PC Registers</Caption>
      <Box className="top-[274px] left-[128px] h-[130px] w-[104px] bg-[#ff7362] text-[13.500px] leading-4 font-bold text-[#4a1a1a]">Method<br />Area</Box>
      <Box className="top-[274px] left-[242px] h-[130px] w-[105px] bg-[#5cabff] text-[13.500px] leading-4 font-bold text-[#15284a]">Heap<br />Area</Box>
      <div className="absolute top-[274px] left-[363px] flex h-[130px] w-[289px] border-2 border-[#12343c] bg-[#8cf3fc] text-center text-[#164a54]">
        <StackColumn name="Thread 1" />
        <StackColumn name="Thread 2" />
        <StackColumn name="Thread 1" last />
      </div>
      <div className="absolute top-[274px] left-[664px] flex h-[130px] w-[109px] flex-col divide-y-2 divide-[#4a1030] border-2 border-[#2a1020] bg-[#ffa1ca] text-center leading-[14px] tracking-[0.300px] whitespace-nowrap text-[#6a2a4a]">
        <Register className="h-[33px] pt-[3px]">PC Register for<br />Thread 1</Register>
        <Register className="h-[33px] pt-[2px]">PC Register for<br />Thread 2</Register>
        <Register className="h-[29px] pt-[10px]">...</Register>
        <Register className="flex-1 pt-[2px]">PC Register for<br />Thread n</Register>
      </div>
      <Box className="top-[274px] left-[790px] h-[130px] w-[91px] bg-[#e5d1ff] font-bold">Native<br />Method<br />Stack</Box>
      <Caption className="top-[416px] left-[508px] text-[14px] tracking-[0.600px] text-[#e32f2a]">Runtime Data Areas</Caption>

      <Caption className="top-[478px] left-[256px] text-[13px] tracking-[0.500px] text-[#e03a2a]">Execution Engine</Caption>
      <Box className="top-[494px] left-[112px] h-[184px] w-[105px] bg-[#ff9b2a] text-[13px] leading-4 font-bold tracking-[0.700px] text-[#4a2a08]">Interpret<br />er</Box>
      <Box className="top-[494px] left-[215px] h-[184px] w-[269px] bg-[#ff78ff]" />
      <Box className="top-[494px] left-[482px] h-[184px] w-[92px] bg-[#22e22a] font-bold text-[#0c4a10]">
        <div className="pt-[18px]">Garbage<br />Collection</div>
      </Box>
      <Caption className="top-[508px] left-[318px] tracking-[0.700px] text-[#5a1a60]">JIT Compiler</Caption>
      <Box className="top-[520px] left-[228px] h-[150px] w-[160px] bg-[#c9f28f]" />
      <Box className="top-[529px] left-[240px] h-[33px] w-[135px] bg-white text-[11.500px] leading-[13px]">Intermediate Code<br />Generator</Box>
      <Box className="top-[579px] left-[240px] h-[32px] w-[135px] bg-white text-[11.500px]">Code Optimizer</Box>
      <Box className="top-[630px] left-[240px] h-[33px] w-[135px] bg-white text-[11.500px] leading-[13px]">Target Code<br />Generator</Box>
      <DownHollow className="top-[560px] left-[296px]" />
      <DownHollow className="top-[611px] left-[296px]" />
      <Box className="top-[581px] left-[396px] h-[31px] w-[80px] bg-white text-[12px]">Profiler</Box>
      <Box className="top-[494px] left-[624px] h-[184px] w-[128px] bg-[#fff75c] font-bold text-[#d8401a]">Native<br />Method<br />Interface<br />(JNI)</Box>
      <Box className="top-[494px] left-[797px] h-[184px] w-[129px] bg-[#cdcecc] font-bold text-[#e0403a]">Native<br />Method<br />Library</Box>

      <div className="absolute top-[168px] left-[1080px] w-[41px] text-center text-[40px] leading-[49.500px] font-black tracking-normal text-black">详<br />细<br />图</div>
      <div className="absolute top-[637px] left-[949px] text-[26.700px] leading-[36px] tracking-normal text-[#c9cdc9] italic">天下没有难学的技术</div>
      <SlideDrawing />
    </div>
  );
}

function RightScroll() {
  return (
    <div className="mt-[3px] flex h-[701px] w-[20px] flex-col items-center bg-[#d9dad8]">
      <div className="flex h-[20px] w-[20px] items-center justify-center border border-[#a5a7a5] bg-[#fdfefd]">
        <Chev c="#666866" className="scale-125 rotate-180" />
      </div>
      <div className="mt-[61px] h-[25px] w-[20px] border border-[#a5a7a5] bg-[#fdfefd]" />
      <div className="mt-[524px] flex h-[21px] w-[20px] shrink-0 items-center justify-center border border-[#a5a7a5] bg-[#fdfefd]">
        <Chev c="#666866" className="scale-125" />
      </div>
      <div className="flex h-[52px] w-[20px] flex-col items-center gap-[11px] bg-[#e3e5e2] pt-[6px]">
        <Svg w={10} h={13}><path d="M0 6l5-5 5 5zM0 12l5-5 5 5z" fill="#5c5e5c" /></Svg>
        <Svg w={10} h={13}><path d="M0 1l5 5 5-5zM0 7l5 5 5-5z" fill="#5c5e5c" /></Svg>
      </div>
    </div>
  );
}

/* ----------------------------------------------------------------- status */

function StatusBar() {
  return (
    <div className="flex h-[30px] items-center border-t border-[#bfc1bf] bg-[#eff1ee] pb-[1px] text-[16.500px] whitespace-nowrap text-[#3e403e]">
      <div className="ml-[8px] w-[220px] tracking-[0.800px]">幻灯片 第 5 张 , 共 40 张</div>
      <Svg w={21} h={18}>
        <path d="M10 4C8 1 4 1 1 2v13c3-1 7 0 9 2 1-2 4-3 6-2V9M10 4c2-3 4-3 6-2M10 4v12" stroke="#5c5e5c" strokeWidth="1.400" />
        <path d="M12 11l7-9 2 2-7 8z" fill="#5c5e5c" />
      </Svg>
      <div className="ml-[23px] w-[980px]">中文(中国)</div>
      <Svg w={16} h={18}><path d="M4 6l4-5 4 5z" fill="#5c5e5c" /><path d="M0 8h16M0 12h16M2 16.500h11" stroke="#5c5e5c" strokeWidth="1.500" /></Svg>
      <div className="ml-[6px] w-[64px]">备注</div>
      <Svg w={18} h={18}><path d="M1 2h16v10h-6l-4 5v-5H1z" fill="#6a6c6a" /></Svg>
      <div className="ml-[5px] w-[60px]">批注</div>
      <div className="flex h-[28px] w-[53px] items-center justify-center bg-[#c8cac8]">
        <Svg w={20} h={18}><path d="M1 1h18v16H1zM5 1v16M5 13h14M9 5h6v4H9z" stroke="#4d4f4d" strokeWidth="1.500" /></Svg>
      </div>
      <Svg w={20} h={18} className="ml-[17px]"><path d="M1 1h6v5H1zM13 1h6v5h-6zM1 12h6v5H1zM13 12h6v5h-6z" stroke="#5c5e5c" strokeWidth="1.500" /></Svg>
      <Svg w={20} h={18} className="ml-[33px]"><path d="M10 3C7 1 4 1 1 1v14c3 0 6 0 9 2 3-2 6-2 9-2V1c-3 0-6 0-9 2zv14M3 5h5M3 8h5M3 11h5M12 5h5M12 8h5M12 11h5" stroke="#5c5e5c" strokeWidth="1.400" /></Svg>
      <Svg w={20} h={18} className="ml-[33px]"><path d="M0 1.500h20M2 2v8h16V2M10 10v6M6 17h8" stroke="#5c5e5c" strokeWidth="1.500" /></Svg>
      <div className="ml-[24px] h-[3px] w-[10px] bg-[#555755]" />
      <div className="ml-[6px] flex w-[138px] items-center">
        <div className="h-px w-[60px] bg-[#8d8f8d]" />
        <div className="h-[16px] w-[6px] bg-[#5c5e5c]" />
        <div className="h-px w-[3px] bg-[#8d8f8d]" />
        <div className="h-[6px] w-px bg-[#8d8f8d]" />
        <div className="h-px flex-1 bg-[#8d8f8d]" />
      </div>
      <Svg w={12} h={12} className="ml-[6px]"><path d="M0 6h12M6 0v12" stroke="#4d4f4d" strokeWidth="2.600" /></Svg>
      <div className="ml-[21px] w-[55px]">91%</div>
      <Svg w={19} h={19}>
        <path d="M1 1h17v17H1z" stroke="#4d4f4d" strokeWidth="1.400" />
        <path d="M9.500 3v4M9.500 12v4M3 9.500h4M12 9.500h4M8 4.500L9.500 3 11 4.500M8 14.500L9.500 16l1.500-1.500M4.500 8L3 9.500 4.500 11M14.500 8L16 9.500 14.500 11" stroke="#4d4f4d" strokeWidth="1.200" />
      </Svg>
    </div>
  );
}

/* ---------------------------------------------------------------- taskbar */

function PptIcon() {
  return (
    <Svg w={23} h={24}>
      <path d="M12 4h10v16H12z" fill="#fbe9e2" stroke="#d04a22" strokeWidth="1.300" />
      <path d="M15 8h5M15 12h5M15 16h5" stroke="#d04a22" strokeWidth="1.500" />
      <path d="M0 3l14-3v24L0 21z" fill="#d24726" />
      <path d="M5 17V7.500h2.500a2.800 2.800 0 0 1 0 5.600H5" stroke="#fff" strokeWidth="2" />
    </Svg>
  );
}

function Task({ className, icon, children }: { className: string; icon: ReactNode; children: ReactNode }) {
  return (
    <div className={`flex h-[41px] shrink-0 items-center border border-[#8ea0b8] text-[17px] whitespace-nowrap text-[#eef2f6] ${className}`}>
      {icon}
      <span>{children}</span>
    </div>
  );
}

function Taskbar() {
  return (
    <div className="flex h-[44px] items-center overflow-hidden border-t-2 border-[#2c3b4e] bg-[#0c2548]">
      <Svg w={54} h={44} className="ml-[11px]">
        <defs>
          <radialGradient id="orb" cx=".5" cy=".9" r=".9">
            <stop offset="0" stopColor="#3fc4f5" />
            <stop offset=".4" stopColor="#1d5f98" />
            <stop offset="1" stopColor="#9fbccd" />
          </radialGradient>
        </defs>
        <circle cx="27" cy="19" r="25" fill="url(#orb)" stroke="#4f7ea0" />
        <path d="M17 7c3-2 7-2 9 0l-2 11c-3-2-6-2-9-1z" fill="#ea6a2c" />
        <path d="M28 8c3 2 7 2 10 1l-2 10c-3 1-7 1-10-1z" fill="#8fc343" />
        <path d="M14 19c3-1 7-1 9 1l-2 10c-3-2-6-2-9-1z" fill="#4a9de0" />
        <path d="M26 20c3 2 6 2 10 1l-2 11c-3 1-7 1-10-1z" fill="#fbc53a" />
      </Svg>
      <Svg w={20} h={23} className="ml-[40px]"><path d="M18 2c-2 3-12 1-14.500 8C1 18 7 21 12 20c5-1 6-8 2-8h-5M14 12v8" stroke="#e0401c" strokeWidth="3.800" /></Svg>
      <Svg w={24} h={24} className="ml-[42px]">
        <g strokeWidth="7.500">
          <path d="M12 4.500a7.500 7.500 0 0 1 6.500 3.700" stroke="#d85ae0" />
          <path d="M18.500 8.200a7.500 7.500 0 0 1 0 7.500" stroke="#f0473a" />
          <path d="M18.500 15.700a7.500 7.500 0 0 1-6.500 3.800" stroke="#f5c52a" />
          <path d="M12 19.500a7.500 7.500 0 0 1-6.500-3.800" stroke="#4fc63a" />
          <path d="M5.500 15.700a7.500 7.500 0 0 1 0-7.500" stroke="#2fb4e8" />
          <path d="M5.500 8.200A7.500 7.500 0 0 1 12 4.500" stroke="#a463f0" />
        </g>
        <circle cx="12" cy="12" r="3.500" fill="#fff" />
      </Svg>
      <Svg w={21} h={21} className="ml-[42px]">
        <circle cx="10.500" cy="10.500" r="10" fill="#f0c62c" />
        <path d="M10.500 10.500L2 5a10 10 0 0 1 17.500.500z" fill="#e04a38" />
        <path d="M10.500 10.500L2 5a10 10 0 0 0 7 15.400z" fill="#38a852" />
        <circle cx="10.500" cy="10.500" r="5" fill="#fff" />
        <circle cx="10.500" cy="10.500" r="3.800" fill="#3f7fe0" />
      </Svg>
      <Svg w={21} h={21} className="ml-[44px]">
        <circle cx="10.500" cy="10.500" r="10" fill="#e8641c" />
        <path d="M5 3c5-4 13-2 15 4-2-1-3 0-3 3 0 4-5 6-9 3-2-2-3-6-3-10z" fill="#2f5fae" />
        <path d="M1 6c3 0 4 2 7 3-2 4 3 6 6 4-1 5-9 6-11 1z" fill="#f6a52a" />
      </Svg>
      <Svg w={25} h={23} className="ml-[42px]">
        <path d="M20 15.500c-3 6-13 5-13-3.500S20 3 20 12H8" stroke="#4db2ee" strokeWidth="4" />
        <path d="M3 21C-1 15 14-1 23 2c2 1 0 4-1 5" stroke="#f2c43a" strokeWidth="2.200" />
      </Svg>
      <Task
        className="ml-[22px] w-[219px] rounded-[3px] bg-linear-to-b from-[#6d84a3] to-[#1f4066] to-60%"
        icon={<Svg w={20} h={22} className="mr-[7px] ml-[12px]"><path d="M0 2l9-2v22l-9-2z" fill="#f2dc94" /><path d="M9 2h5v18H9zM14 5h5v15h-5z" fill="#e3be5c" /></Svg>}
      >
        01_课件
      </Task>
      <Task className="ml-[6px] w-[220px] rounded-l-[3px] bg-linear-to-b from-[#71869f] to-[#274a70] to-60%" icon={<div className="mr-[6px] ml-[11px]"><PptIcon /></div>}>
        尚硅谷_宋红康_01_J...
      </Task>
      <Task className="w-[220px] rounded-r-[3px] bg-linear-to-b from-[#a4b1c2] to-[#75879e]" icon={<div className="mr-[5px] ml-[13px]"><PptIcon /></div>}>
        尚硅谷_宋红康_02_...
      </Task>
      <Task
        className="ml-[7px] w-[218px] rounded-[3px] bg-linear-to-b from-[#6d84a3] to-[#1f4066] to-60%"
        icon={<Svg w={22} h={22} className="mr-[6px] ml-[11px]"><circle cx="5" cy="5" r="3.500" fill="#555" stroke="#ccc" /><path d="M5 9v11" stroke="#222" strokeWidth="3" /><path d="M11 4h9v9h-9z" fill="#f01808" /></Svg>}
      >
        <span className="tracking-[0.200px]">Recording...</span>
      </Task>
      <div className="ml-[19px] w-[35px] text-[17px] text-[#e8edf3]">api</div>
      <Svg w={22} h={22}>
        <path d="M0 6h11v15H0z" fill="#fff" /><path d="M2 10h7M2 13h7M2 16h7" stroke="#222" strokeWidth="1.400" />
        <path d="M10 5c0-5 9-5 9 0 0 4-4 4-4 8M15 16v4" stroke="#f4e51c" strokeWidth="3.500" />
      </Svg>
      <div className="ml-[6px] w-[102px] text-[17px] text-[#e8edf3]">Ajax.chm</div>
      <div className="mb-5 w-[25px] text-[21px] leading-none font-bold text-[#e8edf3]">»</div>
      <Svg w={24} h={24} className="mb-[6px]">
        <path d="M2 3l17-3 5 19-17 5z" fill="#e9521d" />
        <path d="M18 6c-6-2-10 0-9 3s8 2 8 6-6 4-9 2" stroke="#fff" strokeWidth="3" />
      </Svg>
      <Svg w={10} h={7} className="ml-[22px]"><path d="M0 7l5-6 5 6z" fill="#fff" /></Svg>
      <Svg w={18} h={20} className="ml-[21px]"><path d="M1 6h3l6-5v18l-6-5H1z" fill="#e8e8e8" stroke="#333" /><path d="M13 5c3 3 3 7 0 10" stroke="#cfd4da" strokeWidth="1.500" /></Svg>
      <Svg w={23} h={22} className="ml-[12px]"><circle cx="15" cy="5" r="4.500" fill="#9fd0f5" /><path d="M9 20c0-14 14-14 13 0z" fill="#3f95e0" /><circle cx="7" cy="8" r="6" fill="#f5c24a" /><path d="M3 16c1-4 7-4 8 0z" fill="#e0a02a" /></Svg>
      <Svg w={24} h={23} className="ml-[11px]"><circle cx="12" cy="11.500" r="10.500" fill="#f6e12a" stroke="#3c9a3a" strokeWidth="1.500" /><path d="M6 11.500h12M12 5.500v12" stroke="#1b7f2a" strokeWidth="4" /></Svg>
      <Svg w={21} h={21} className="ml-[12px]"><path d="M6 5h14v10H6zM10 19h8M14 15v4M3 1v6M1 1h5v5H1zM3 7v10h4" stroke="#dfe4ea" strokeWidth="1.600" /></Svg>
      <Svg w={20} h={22} className="ml-[12px]"><path d="M1 4h11v16H1zM4 1h5v3H4z" stroke="#eee" strokeWidth="1.600" fill="#0e2a4e" /><path d="M9 8h10v5l-3 3h-4l-3-3zM11 8V3M17 8V3M14 16v4H8" stroke="#fff" strokeWidth="1.800" fill="#ddd" /></Svg>
      <Svg w={24} h={22} className="ml-[13px]"><path d="M1 1h22v15H1z" fill="#8d8f9b" stroke="#2a3a9a" /><circle cx="12" cy="8" r="6" stroke="#f0281c" strokeWidth="2.400" /><path d="M8 4l8 8" stroke="#f0281c" strokeWidth="2.400" /><path d="M1 19h9M13 19h9" stroke="#aaacb4" strokeWidth="3" /></Svg>
      <div className="ml-[25px] w-[100px] text-[17px] whitespace-nowrap text-[#eef2f6]">上午 10:29</div>
      <div className="h-[42px] w-[18px] border border-[#5f7590] bg-[#2b4565]" />
    </div>
  );
}

/* --------------------------------------------------------------- overlays */

function ImeBar() {
  return (
    <div className="absolute top-[973px] left-[1705px] flex h-[30px] w-[208px] items-center border border-[#b5bfc9] bg-[#fafcfd]">
      <Svg w={26} h={26} className="ml-[2px]">
        <path d="M4 3c-7 10-1 21 9 21s16-11 9-21c4 11-1 18-9 18S1 14 4 3z" fill="#0b7563" stroke="#0b7563" />
        <path d="M9 1v12c0 6 8 6 8 0V1" stroke="#f39a3c" strokeWidth="3.800" />
      </Svg>
      <div className="ml-[5px] w-[29px] text-[20px] leading-none font-bold text-[#3f86c6]">中</div>
      <Svg w={19} h={20}><path d="M11 1c3 7-1 14-10 14 4 7 17 4 17-5 0-4-3-7-7-9z" fill="#3f86c6" /></Svg>
      <Svg w={16} h={20} className="ml-[13px]"><circle cx="4" cy="5" r="3" stroke="#3f86c6" strokeWidth="1.800" /><path d="M12 11v3c0 2-1 4-3 5" stroke="#3f86c6" strokeWidth="3" /></Svg>
      <Svg w={26} h={18} className="ml-[5px]"><path d="M1 1h24v16H1z" stroke="#3f86c6" strokeWidth="2" fill="#3f86c6" /><path d="M4 5h18M4 9h18M6 13.500h14" stroke="#fff" strokeWidth="2" strokeDasharray="2.200 1.600" /></Svg>
      <Svg w={16} h={20} className="ml-[7px]"><circle cx="8" cy="5" r="4.500" fill="#3f86c6" /><path d="M1 18c-1-10 15-10 14 0z" fill="#3f86c6" /></Svg>
      <Svg w={21} h={21} className="ml-[10px]"><path d="M2 19l9-9" stroke="#3f86c6" strokeWidth="4" /><path d="M18 2l-5 1-4 4 1 4 4 2 5-2 2-5-4 3-3-2z" fill="#3f86c6" /></Svg>
    </div>
  );
}

function PlayerBadge() {
  return (
    <svg className="absolute top-[914px] left-[1825px] drop-shadow-[0_1px_1px_#9a9a9a]" width="58" height="56" viewBox="0 0 58 56" fill="none">
      <path d="M17 3l6 8M40 3l-6 8" stroke="#fbfcfb" strokeWidth="5" strokeLinecap="round" />
      <rect x="2" y="9" width="54" height="44" rx="9" fill="#fbfcfb" />
      <path d="M22 22v18c0 1 1 1.500 2 1l14-9c1-.600 1-1.400 0-2l-14-9c-1-.500-2 0-2 1z" fill="#e6e8e6" stroke="#a2a4a2" strokeWidth="1.500" />
    </svg>
  );
}

function Pointer() {
  return (
    <svg className="absolute top-[144px] left-[1850px]" width="70" height="72" viewBox="0 0 70 72" fill="none">
      <path d="M16 7l9-5h24l14 8 7 14v32l-12 12-22 2-16-2L6 54 3 44V27z" fill="#ebe400" />
      <path d="M52 58l18-10v20H48z" fill="#d6d8c8" />
      <path d="M50 46l8-2 1 10-5 3z" fill="#f0b800" />
      <path d="M37 36v30l6-5 5 10h7l-6-12h9z" fill="#000" stroke="#f3f3a0" strokeWidth=".8" />
    </svg>
  );
}

export default function App() {
  return (
    <div className="relative flex h-[1080px] w-[1920px] flex-col overflow-hidden bg-[#e3e5e2] font-['Noto_Sans','Noto_Sans_CJK_SC',sans-serif]">
      <div className="flex h-[1036px]">
        <div className="w-[3px] shrink-0 border-r border-[#2d6f60] bg-[#4fa28d]" />
        <div className="flex w-[1917px] flex-col">
          <div className="relative h-[83px] bg-[#bf4e26]">
            <div className="absolute top-0 left-[1217px]">
              <Circuit />
            </div>
            <div className="relative">
              <TitleBar />
              <TabRow />
            </div>
          </div>
          <div className="flex h-[132px] border-b border-[#c6c8c6] bg-[#eff1ee]">
            <Clipboard />
            <Slides />
            <FontGroup />
            <Paragraph />
            <Drawing />
            <Editing />
          </div>
          <div className="flex h-[790px]">
            <ThumbPane />
            <div className="ml-[3px] flex flex-1 flex-col">
              <div className="flex h-[732px] border-b border-[#b9bbb9]">
                <div className="mt-[19px] ml-[220px] shrink-0">
                  <Slide />
                </div>
                <div className="ml-auto pr-[2px]">
                  <RightScroll />
                </div>
              </div>
              <div className="mt-[8px] ml-[14px] text-[20.600px] leading-[28px] text-[#3e403e]">单击此处添加备注</div>
            </div>
          </div>
          <StatusBar />
        </div>
      </div>
      <Taskbar />
      <ImeBar />
      <PlayerBadge />
      <Pointer />
    </div>
  );
}
